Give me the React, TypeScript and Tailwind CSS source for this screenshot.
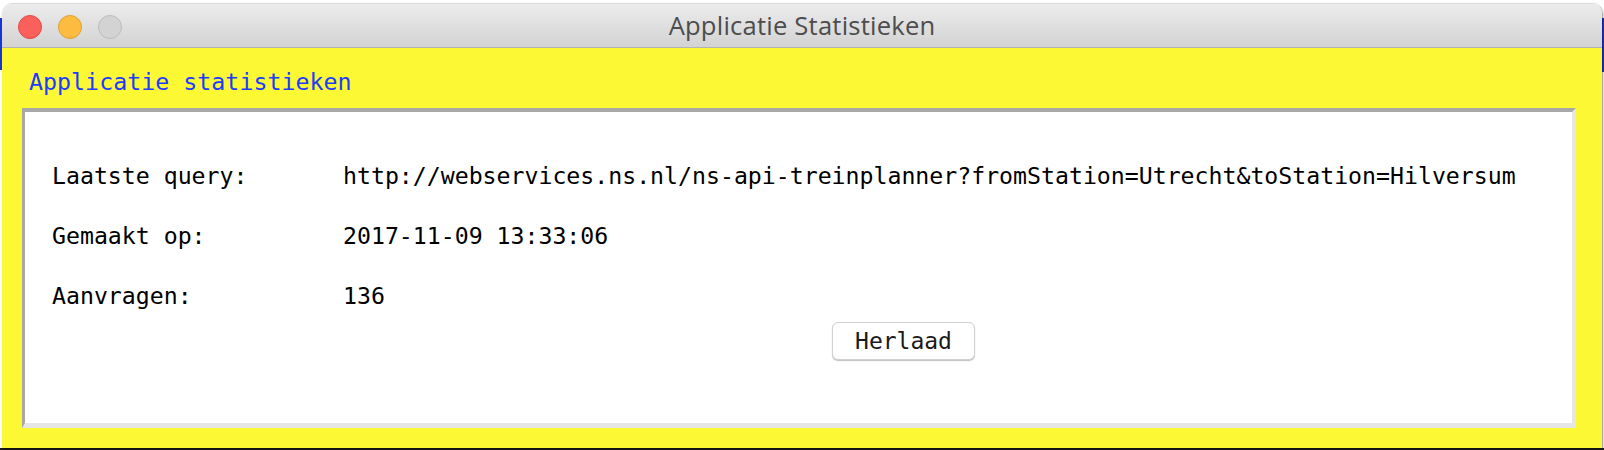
import React from 'react';

const mono = { fontFamily: '"DejaVu Sans Mono", "Liberation Mono", monospace' };

const rows = [
  { label: 'Laatste query:', value: 'http://webservices.ns.nl/ns-api-treinplanner?fromStation=Utrecht&toStation=Hilversum' },
  { label: 'Gemaakt op:', value: '2017-11-09 13:33:06' },
  { label: 'Aanvragen:', value: '136' },
];

const TrafficLights: React.FC = () => (
  <div className="absolute left-[16px] top-[11px] flex gap-[16px]">
    <span className="w-[24px] h-[24px] rounded-full bg-[#fc605c] border border-[#de4a45]" />
    <span className="w-[24px] h-[24px] rounded-full bg-[#fdbc40] border border-[#dea034]" />
    <span className="w-[24px] h-[24px] rounded-full bg-[#d3d3d3] border border-[#bcbcbc]" />
  </div>
);

const App: React.FC = () => {
  return (
    <div className="relative w-[1604px] h-[450px] bg-white overflow-hidden">
      {/* desktop behind the window */}
      <div className="absolute left-0 top-[18px] w-[2px] h-[52px] bg-[#1836d8]" />
      <div className="absolute right-0 top-[18px] w-[2px] h-[54px] bg-[#1836d8]" />
      <div className="absolute left-0 bottom-0 w-full h-[2px] bg-[#1c1c1c]" />

      {/* Window */}
      <div className="relative ml-[2px] mt-[3px] w-[1600px] h-[445px] rounded-t-[10px] overflow-hidden shadow-[1px_1px_2px_rgba(0,0,0,0.45)]">
        {/* Title bar */}
        <div className="relative h-[45px] bg-gradient-to-b from-[#ececec] to-[#d3d3d3] border-t border-[#dcdcdc] border-b border-b-[#b2b2b2] flex items-center justify-center">
          <TrafficLights />
          <span
            className="text-[25.6px] text-[#4d4d4d] pt-[1px] tracking-[0.2px]"
            style={{ fontFamily: '"Open Sans", Inter, sans-serif' }}
          >
            Applicatie Statistieken
          </span>
        </div>

        {/* Content */}
        <div className="h-[400px] bg-[#fdf834] pt-[20px]" style={mono}>
          <h1 className="pl-[27px] text-[23.3px] leading-[28px] text-[#1b3cff]">Applicatie statistieken</h1>

          <div className="ml-[20px] mt-[12px] w-[1554px] h-[320px] bg-white border-t-4 border-l-[3px] border-t-[#a8a8a8] border-l-[#a8a8a8] border-b-[5px] border-r-4 border-b-[#e6e6e6] border-r-[#e6e6e6]">
            <div className="pt-[50px] pl-[27px] flex flex-col gap-[32px] text-[23.2px] leading-[28px] text-black">
              {rows.map((r) => (
                <div key={r.label} className="flex">
                  <span className="w-[291px] shrink-0">{r.label}</span>
                  <span>{r.value}</span>
                </div>
              ))}
            </div>
            <div className="mt-[12px] ml-[807px]">
              <button className="w-[143px] h-[38px] rounded-[6px] bg-white border border-[#d0d0d0] shadow-[0_1px_1px_rgba(0,0,0,0.25)] text-[23px] leading-[28px] text-[#1a1a1a]">
                Herlaad
              </button>
            </div>
          </div>
        </div>
      </div>
    </div>
  );
};

export default App;
